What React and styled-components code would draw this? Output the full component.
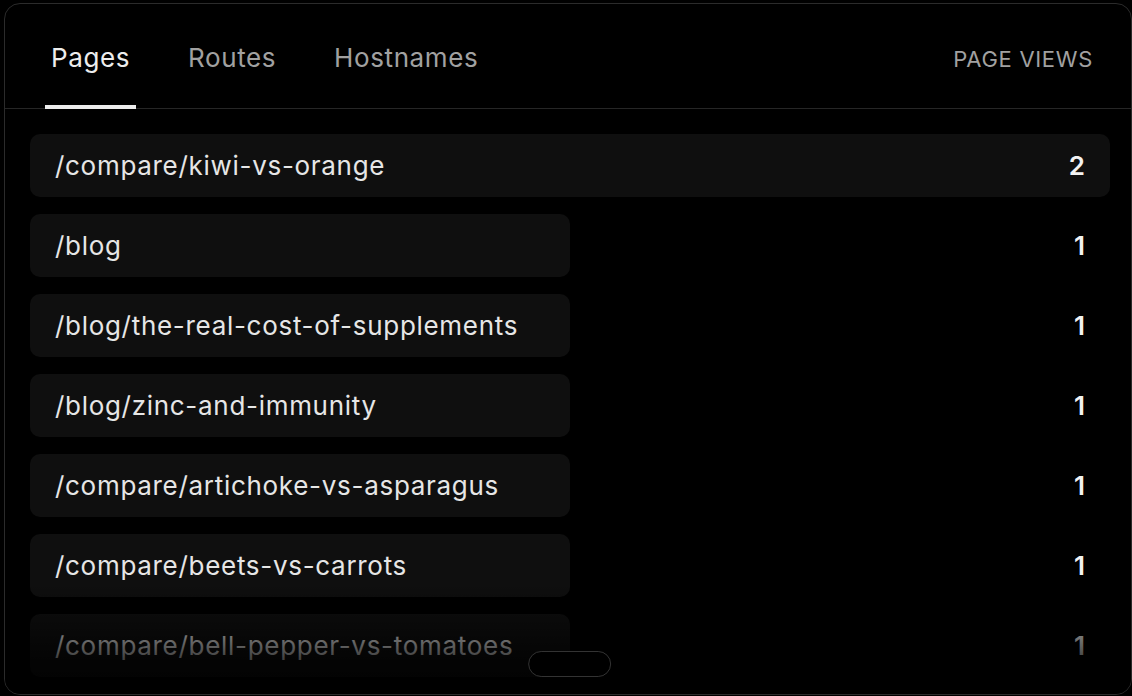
import React from "react";
import styled, { createGlobalStyle } from "styled-components";

const GlobalStyle = createGlobalStyle`
  html, body {
    margin: 0;
    padding: 0;
    background: #000;
  }
  body {
    font-family: Inter, "Noto Sans", "Liberation Sans", sans-serif;
    -webkit-font-smoothing: antialiased;
  }
`;

const Page = styled.div`
  width: 1132px;
  height: 696px;
  padding: 3px 0 0 4px;
  box-sizing: border-box;
  background: #000;
  overflow: hidden;
`;

const Card = styled.div`
  position: relative;
  width: 1128px;
  height: 692px;
  box-sizing: border-box;
  border: 1.5px solid #2b2b2b;
  border-radius: 16px;
  background: #000;
  overflow: hidden;
  display: flex;
  flex-direction: column;
`;

const Header = styled.div`
  display: flex;
  align-items: stretch;
  justify-content: space-between;
  height: 104px;
  padding: 0 38px 0 40px;
  border-bottom: 1px solid #262626;
`;

const Tabs = styled.div`
  display: flex;
  gap: 46px;
`;

const Tab = styled.div`
  display: flex;
  align-items: center;
  padding: 6px 6px 0;
  font-size: 26px;
  letter-spacing: 0.6px;
  color: ${(p) => (p.$active ? "#ededed" : "#a1a1a1")};
  border-bottom: 4px solid ${(p) => (p.$active ? "#ededed" : "transparent")};
  margin-bottom: -1px;
`;

const ColumnLabel = styled.div`
  display: flex;
  align-items: center;
  padding-top: 6px;
  font-size: 22px;
  color: #a1a1a1;
  text-transform: uppercase;
  letter-spacing: 0.7px;
`;

const List = styled.div`
  display: flex;
  flex-direction: column;
  gap: 17px;
  padding: 25px 21px 0 25px;
`;

const Row = styled.div`
  position: relative;
  display: flex;
  align-items: center;
  justify-content: space-between;
  height: 63px;
  flex-shrink: 0;
  padding: 0 25px;
`;

const Bar = styled.div`
  position: absolute;
  left: 0;
  top: 0;
  bottom: 0;
  border-radius: 10px;
  background: #0f0f0f;
`;

const Path = styled.span`
  position: relative;
  font-size: 26px;
  color: #e6e6e6;
  letter-spacing: 0.7px;
`;

const Count = styled.span`
  position: relative;
  font-size: 26px;
  font-weight: 600;
  color: #f2f2f2;
`;

const Fade = styled.div`
  position: absolute;
  left: 0;
  right: 0;
  bottom: 0;
  height: 110px;
  background: linear-gradient(to bottom, rgba(0, 0, 0, 0) 0%, rgba(0, 0, 0, 0.74) 70%, rgba(0, 0, 0, 0.82) 100%);
  pointer-events: none;
`;

const MoreHandle = styled.button`
  position: absolute;
  left: 50%;
  bottom: 17px;
  transform: translateX(-48%);
  width: 83px;
  height: 26px;
  border-radius: 13px;
  border: 1.5px solid #333;
  background: #000;
  padding: 0;
`;

const pages = [
  { path: "/compare/kiwi-vs-orange", views: 2 },
  { path: "/blog", views: 1 },
  { path: "/blog/the-real-cost-of-supplements", views: 1 },
  { path: "/blog/zinc-and-immunity", views: 1 },
  { path: "/compare/artichoke-vs-asparagus", views: 1 },
  { path: "/compare/beets-vs-carrots", views: 1 },
  { path: "/compare/bell-pepper-vs-tomatoes", views: 1 },
];

export default function App() {
  const max = Math.max(...pages.map((p) => p.views));
  return (
    <Page>
      <GlobalStyle />
      <Card>
        <Header>
          <Tabs>
            <Tab $active>Pages</Tab>
            <Tab>Routes</Tab>
            <Tab>Hostnames</Tab>
          </Tabs>
          <ColumnLabel>Page Views</ColumnLabel>
        </Header>
        <List>
          {pages.map((p) => (
            <Row key={p.path}>
              <Bar style={{ width: `${(p.views / max) * 100}%` }} />
              <Path>{p.path}</Path>
              <Count>{p.views}</Count>
            </Row>
          ))}
        </List>
        <Fade />
        <MoreHandle aria-label="Show more" />
      </Card>
    </Page>
  );
}
